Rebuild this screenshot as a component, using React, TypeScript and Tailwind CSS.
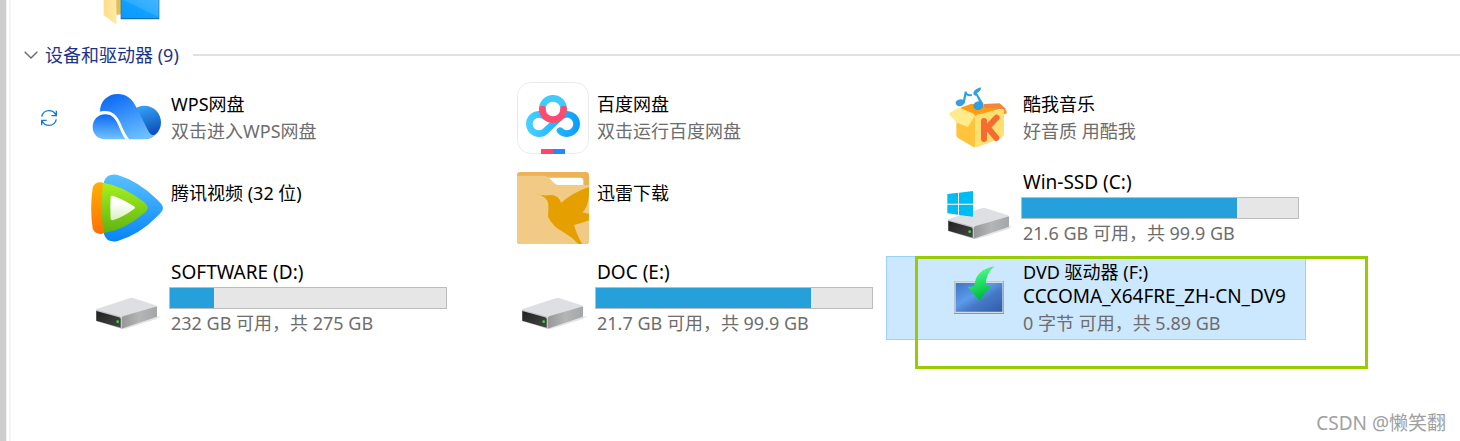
import type { ReactNode } from 'react'

type Item = {
  name: string
  label?: string
  detail?: string
  used?: number
  icon: ReactNode
  syncing?: boolean
  selected?: boolean
}

function Icon({ children }: { children: ReactNode }) {
  return (
    <svg viewBox="0 0 216 216" className="size-18 shrink-0" aria-hidden="true">
      {children}
    </svg>
  )
}

function FolderIcon() {
  return (
    <svg viewBox="0 0 180 75" className="h-[25px] w-[60px]" aria-hidden="true">
      <defs>
        <linearGradient id="folder-blue" x1="0" y1="1" x2="1" y2="0">
          <stop offset="0" stopColor="#0a98ff" />
          <stop offset=".5" stopColor="#10a0ff" />
          <stop offset=".55" stopColor="#2dacff" />
          <stop offset="1" stopColor="#45b6ff" />
        </linearGradient>
        <linearGradient id="folder-yellow" x1="0" y1="0" x2="1" y2="0">
          <stop offset="0" stopColor="#ffdf88" />
          <stop offset="1" stopColor="#ffe9a6" />
        </linearGradient>
      </defs>
      <path d="M38 0h20v42l-18 3z" fill="#e3bd58" />
      <path d="M2 0h38v74L2 45z" fill="url(#folder-yellow)" />
      <path d="M53 0h116v58H53z" fill="#1772ae" />
      <path d="M55 0h112v54H55z" fill="url(#folder-blue)" />
    </svg>
  )
}

function WpsIcon() {
  return (
    <Icon>
      <defs>
        <linearGradient id="wps-main" x1=".2" y1="0" x2=".7" y2="1">
          <stop offset="0" stopColor="#0b68f5" />
          <stop offset="1" stopColor="#6cc0ff" />
        </linearGradient>
        <linearGradient id="wps-right" x1=".3" y1="0" x2=".6" y2="1">
          <stop offset="0" stopColor="#36a7f7" />
          <stop offset="1" stopColor="#0646b4" />
        </linearGradient>
        <linearGradient id="wps-left" x1="0" y1="0" x2="0" y2="1">
          <stop offset="0" stopColor="#0c69f5" />
          <stop offset="1" stopColor="#72c3ff" />
        </linearGradient>
      </defs>
      <circle cx="160" cy="121" r="50" fill="url(#wps-right)" />
      <path d="M27 90C26 58 50 36 80 36c25 0 43 13 55 38l37 73c7 14 15 14 23 8-9 11-21 17-36 17h-44c-9-7-14-18-20-31C83 113 73 90 46 89c-7-1-14 0-19 1z" fill="url(#wps-main)" />
      <path d="M43 97c22 0 31 14 42 38 6 14 11 28 19 37H43C20 172 5 155 5 135s15-38 38-38z" fill="url(#wps-left)" />
      <path d="M24 94c34-9 51 4 65 41 6 15 12 28 22 38" fill="none" stroke="#fff" strokeWidth="8" />
    </Icon>
  )
}

function BaiduIcon() {
  return (
    <Icon>
      <defs>
        <linearGradient id="baidu-blue" gradientUnits="userSpaceOnUse" x1="27" y1="0" x2="189" y2="0">
          <stop offset="0" stopColor="#46d3ff" />
          <stop offset="1" stopColor="#0a9cff" />
        </linearGradient>
      </defs>
      <rect x="1.5" y="1.5" width="213" height="213" rx="40" fill="#fff" stroke="#ebebeb" strokeWidth="3" />
      <g fill="none" strokeWidth="20" strokeLinecap="round">
        <path d="M91 141l-4 5a29 29 0 1 1-2-42M87 146l40-38a29 29 0 1 1 2 38" stroke="url(#baidu-blue)" />
        <path d="M76 81a32 32 0 0 1 64 0" stroke="#40cbfc" />
        <path d="M76 81a32 32 0 0 0 64 0" stroke="#ff4b70" />
      </g>
      <path d="M72 201h36v15H72z" fill="#ff4569" />
      <path d="M108 201h36v15h-36z" fill="#1e8cff" />
    </Icon>
  )
}

function KuwoIcon() {
  return (
    <Icon>
      <path d="M51 78l34-13 96 12-86 27z" fill="#ff9c12" />
      <path d="M122 66l48-2 20 18-65-4z" fill="#f58639" />
      <path d="M180 78q12 4 11 16l-10 4z" fill="#f79223" />
      <path d="M40 115l56-16v97q-5 0-9-3l-42-25q-5-3-5-9z" fill="#ffc43c" />
      <path d="M96 106q0-6 6-8l72-17q9-2 9 7v66q0 9-7 13l-74 29q-6 0-6-7z" fill="#ffdf72" />
      <path d="M21 92l23-13q4-2 9 0l39 16q5 3 3 8l-18 28q-3 4-8 2l-28-11q-4-2-6-7l-16-17q-2-4 2-6z" fill="#ffea8c" />
      <path d="M123 117v54M161 107l-34 36M132 134l28 34" fill="none" stroke="#f46c2f" strokeWidth="18" strokeLinecap="round" />
      <g fill="#329fdf">
        <ellipse cx="51" cy="62" rx="13" ry="10" transform="rotate(-15 51 62)" />
        <ellipse cx="106" cy="71" rx="15" ry="13" transform="rotate(-15 106 71)" />
        <path d="M59 60l6-31 5-1q3 11 16 8l1 6q-11 3-17-3l-5 26z" />
        <path d="M91 36q-1-14 23-20 1 11-12 17l20 34-7 5-15-31q-6 1-9-5z" />
      </g>
    </Icon>
  )
}

function TencentIcon() {
  return (
    <Icon>
      <defs>
        <linearGradient id="tx-blue" x1="0" y1="0" x2="0" y2="1">
          <stop offset="0" stopColor="#58c1ff" />
          <stop offset="1" stopColor="#0784f8" />
        </linearGradient>
        <linearGradient id="tx-orange" x1="0" y1="0" x2="0" y2="1">
          <stop offset="0" stopColor="#ffb000" />
          <stop offset="1" stopColor="#ff6f08" />
        </linearGradient>
        <linearGradient id="tx-green" x1="0" y1="0" x2="0" y2="1">
          <stop offset="0" stopColor="#a8f01d" />
          <stop offset="1" stopColor="#5eb411" />
        </linearGradient>
        <linearGradient id="tx-white" x1="0" y1="0" x2="0" y2="1">
          <stop offset=".3" stopColor="#fff" />
          <stop offset="1" stopColor="#d7efbd" />
        </linearGradient>
      </defs>
      <path d="M39 29q8-26 39-21 65 19 121 75 17 16 17 25t-17 25q-53 55-121 75-31 5-39-21-9-79 0-158z" fill="url(#tx-blue)" />
      <path d="M5 48q5-19 27-17l20 10v136l-20 9q-22 1-27-17-9-57 0-121z" fill="url(#tx-orange)" />
      <path d="M36 32q60 9 123 58 11 9 11 17t-11 17q-60 51-121 59-11-75-2-151z" fill="url(#tx-green)" />
      <path d="M59 75q1-6 9-3 29 10 61 31 6 4 0 8-31 23-61 33-8 2-9-4-2-32 0-65z" fill="url(#tx-white)" />
    </Icon>
  )
}

function XunleiIcon() {
  return (
    <Icon>
      <defs>
        <clipPath id="xl-clip">
          <rect width="216" height="216" rx="10" />
        </clipPath>
      </defs>
      <g clipPath="url(#xl-clip)">
        <path d="M0 0h216v216H0z" fill="#edb255" />
        <path d="M94 17h96q9 0 9 9v18H94z" fill="#fff" />
        <path d="M0 11h82q7 0 12 5l18 18q5 5 12 5h92v177H0z" fill="#f1ca86" />
        <path d="M52 62q23 10 42 8 28-5 39 22 31-29 83-47v26q-4 36-20 50l20 5v19q-23 9-45 14 10 34 25 57h-12q-17-20-42-34-36-19-49-48 2-20 1-37-1-23-42-35z" fill="#e5a000" />
      </g>
    </Icon>
  )
}

function DriveIcon({ system }: { system?: boolean }) {
  return (
    <Icon>
      <defs>
        <linearGradient id="drive-side" x1="0" y1="0" x2="1" y2="0">
          <stop offset="0" stopColor="#979797" />
          <stop offset=".5" stopColor="#b4b5b7" />
          <stop offset="1" stopColor="#a5a6a8" />
        </linearGradient>
        <linearGradient id="drive-front" x1="0" y1="0" x2="1" y2="1">
          <stop offset="0" stopColor="#202020" />
          <stop offset="1" stopColor="#474747" />
        </linearGradient>
      </defs>
      <path d="M92 200l106-36 12-2-13 9-98 31z" fill="#e4e4e4" />
      <path d="M15 144q0-3 4-4l99-32q4-1 8 0l68 22q4 1 4 4v30l-106 36-77-23z" fill="#dedfe3" />
      <path d="M92 168q1-4 6-6l96-28q4-1 4 2v28l-106 36z" fill="url(#drive-side)" />
      <path d="M15 143l72 20q5 1 5 6v31l-77-23z" fill="#c2c3c6" />
      <path d="M16 147l68 19q5 2 5 6v25l-73-21z" fill="url(#drive-front)" />
      <circle cx="80" cy="179" r="4" fill="#37e33e" />
      {system && (
        <g fill="#00bcf2">
          <path d="M13 66l32-4v33H13zM48 62l42-5v38H48zM13 98h32v30l-32-4zM48 98h42v36l-42-5z" />
        </g>
      )}
    </Icon>
  )
}

function InstallIcon() {
  return (
    <Icon>
      <defs>
        <linearGradient id="dvd-screen" x1="0" y1="0" x2="1" y2="1">
          <stop offset="0" stopColor="#3e74c4" />
          <stop offset=".4" stopColor="#5b9bea" />
          <stop offset=".6" stopColor="#4579c5" />
          <stop offset="1" stopColor="#315da8" />
        </linearGradient>
        <linearGradient id="dvd-arrow" x1="0" y1="0" x2=".3" y2="1">
          <stop offset="0" stopColor="#7dff9d" />
          <stop offset=".5" stopColor="#28e66a" />
          <stop offset="1" stopColor="#00b93a" />
        </linearGradient>
      </defs>
      <path d="M33 57h150v99H33z" fill="#8797a5" />
      <path d="M34 58h147v95H34z" fill="#d3dce1" />
      <path d="M38 63h140v86H38z" fill="url(#dvd-screen)" />
      <path d="M155 13q-27 20-27 58l16 1-35 43-35-40 20-2q3-50 61-60z" fill="url(#dvd-arrow)" />
    </Icon>
  )
}

function SyncIcon() {
  return (
    <svg viewBox="0 0 48 48" className="size-4" fill="none" stroke="#1279d8" strokeWidth="4" role="img" aria-label="同步">
      <path d="M2 20C5 8 13 2 24 2c9 0 17 5 21 14M46 2v15H31" />
      <path d="M46 28C43 40 35 46 24 46c-9 0-17-5-21-14M2 46V31h15" />
    </svg>
  )
}

const items: Item[] = [
  { name: 'WPS网盘', detail: '双击进入WPS网盘', icon: <WpsIcon />, syncing: true },
  { name: '百度网盘', detail: '双击运行百度网盘', icon: <BaiduIcon /> },
  { name: '酷我音乐', detail: '好音质 用酷我', icon: <KuwoIcon /> },
  { name: '腾讯视频 (32 位)', icon: <TencentIcon /> },
  { name: '迅雷下载', icon: <XunleiIcon /> },
  { name: 'Win-SSD (C:)', detail: '21.6 GB 可用，共 99.9 GB', used: 78, icon: <DriveIcon system /> },
  { name: 'SOFTWARE (D:)', detail: '232 GB 可用，共 275 GB', used: 16, icon: <DriveIcon /> },
  { name: 'DOC (E:)', detail: '21.7 GB 可用，共 99.9 GB', used: 78, icon: <DriveIcon /> },
  {
    name: 'DVD 驱动器 (F:)',
    label: 'CCCOMA_X64FRE_ZH-CN_DV9',
    detail: '0 字节 可用，共 5.89 GB',
    icon: <InstallIcon />,
    selected: true,
  },
]

function Tile({ item }: { item: Item }) {
  const hasBar = item.used !== undefined

  return (
    <li
      className={`relative flex h-[84px] items-center border ${
        item.selected ? 'border-[#99d1ff] bg-[#cce8ff]' : 'border-transparent'
      }`}
    >
      <div className="w-14 shrink-0 pl-1.5">{item.syncing && <SyncIcon />}</div>
      {item.icon}
      <div className="min-w-0 flex-1 pr-1.5 pb-0.5 pl-2 leading-6 whitespace-nowrap">
        <div className={hasBar ? 'text-[19px] text-black' : 'text-black'}>{item.name}</div>
        {item.label && <div className="text-[19px] text-black">{item.label}</div>}
        {hasBar && (
          <div
            role="progressbar"
            aria-label={item.name}
            aria-valuenow={item.used}
            className="-ml-0.5 mt-[3px] -mb-px h-[22px] border border-[#bcbcbc] bg-[#e6e6e6]"
          >
            <div className="h-full bg-[#26a0da]" style={{ width: `${item.used}%` }} />
          </div>
        )}
        {item.detail ? <div className="mt-[3px] text-[#6d6d6d]">{item.detail}</div> : <div className="h-7" />}
      </div>
      {/* Highlight box around the installer disc */}
      {item.selected && (
        <div className="pointer-events-none absolute -top-px left-7 h-[113px] w-[453px] border-3 border-[#99cc00]" />
      )}
    </li>
  )
}

export default function App() {
  return (
    <div className="relative flex min-h-screen overflow-hidden bg-white font-['Noto_Sans','Noto_Sans_CJK_SC',sans-serif] text-[18px]">
      <div className="w-1.5 shrink-0 bg-[#cdcdcd]" />
      <div className="-mr-px w-[5px] shrink-0 border-r-2 border-l border-r-[#f5f5f5] border-l-[#f0f0f0] bg-white" />
      <main className="min-w-0 flex-1">
        <div className="pl-[93px]">
          <FolderIcon />
        </div>
        <section className="pt-[18px]">
          <div className="flex h-6 items-center gap-3.5">
            <button type="button" className="flex items-center gap-[7px] pl-3.5 leading-6 text-[#1e3287]">
              <svg viewBox="0 0 14 8" className="h-2 w-3.5" fill="none" stroke="#6b6b6b" strokeWidth="1.4" aria-hidden="true">
                <path d="M.7.7L7 7 13.3.7" />
              </svg>
              设备和驱动器 (9)
            </button>
            <div className="h-0.5 flex-1 bg-[#e0e0e0]" />
          </div>
          <ul className="mt-[9px] grid grid-cols-[repeat(auto-fill,420px)] gap-1.5 pl-6">
            {items.map((item) => (
              <Tile key={item.name} item={item} />
            ))}
          </ul>
        </section>
      </main>
      <div className="absolute right-3.5 bottom-1.5 text-[19px] leading-6 text-[#a0a0a0]">CSDN @懒笑翻</div>
    </div>
  )
}
